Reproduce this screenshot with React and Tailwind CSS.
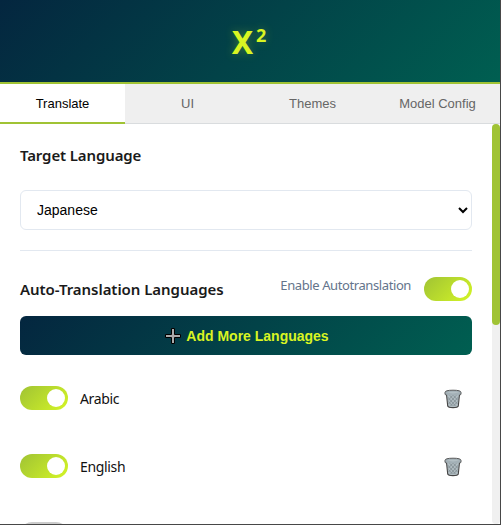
import React from "react";

const tabs = ["Translate", "UI", "Themes", "Model Config"];

function Toggle() {
  return (
    <div className="flex h-6 w-12 shrink-0 items-center justify-end rounded-full bg-[linear-gradient(135deg,#a0c334,#d4f526)] pr-[3px]">
      <div className="h-[18px] w-[18px] rounded-full bg-white" />
    </div>
  );
}

function Trash() {
  return (
    <svg width="18" height="20" viewBox="0 0 18 20" fill="none">
      <path d="M2.4 4.5 3.7 17Q4.2 18.6 9 18.6T14.3 17L15.6 4.5Z" fill="#b0bcc1" stroke="#454545" strokeWidth="1.1" />
      <path d="M3.6 8 11.5 17M5 5.5 13.5 15M8.5 5.5 14 11.5M4.4 12.5 8.5 17M14.4 8 6.5 17M13 5.5 4.5 15M9.5 5.5 4 11.5M13.6 12.5 9.5 17" stroke="#7b878d" strokeWidth="0.7" />
      <path d="M1 3.4Q1 1.2 9 1.2T17 3.4V5Q17 6 15.4 6Q9 7 2.6 6Q1 6 1 5Z" fill="#a3b0b6" />
      <path d="M2.6 6Q1 6 1 5V3.4Q1 1.2 9 1.2T17 3.4V5Q17 6 15.4 6" stroke="#4c4c4c" strokeWidth="0.9" />
      <path d="M2.4 3.6Q9 1.8 15.6 3.6Q9 5.2 2.4 3.6Z" fill="#b3bfc4" />
    </svg>
  );
}

function LanguageRow({ name }) {
  return (
    <div className="flex h-6 items-center">
      <Toggle />
      <span className="ml-3 flex-1 pt-[2px] text-[14px] leading-5 tracking-[-0.35px] text-[#111]">{name}</span>
      <button className="mr-2.5 pt-[2px]" aria-label="Delete">
        <Trash />
      </button>
    </div>
  );
}

export default function App() {
  return (
    <div className="flex h-[525px] w-[501px] flex-col overflow-hidden border-r border-b border-[#474747] bg-white font-['Noto_Sans',sans-serif]">
      <header className="flex h-[84px] shrink-0 items-start justify-center border-b-2 border-[#a0c334] bg-[linear-gradient(135deg,#04263f,#005f51)]">
        <h1 className="flex pt-[19px] pr-[2px] font-bold leading-[46px] text-[#d9f522] [text-shadow:0_0_10px_rgba(212,245,38,0.3)]">
          <span className="text-[32px]">X</span>
          <span className="ml-[3px] text-[18px] leading-[33px]">2</span>
        </h1>
      </header>
      <nav className="grid h-10 shrink-0 grid-cols-4 font-['Liberation_Sans',sans-serif] text-[13px]">
        {tabs.map((t, i) => (
          <button
            key={t}
            className={
              i === 0
                ? "border-b-2 border-[#a0c334] bg-white pt-[2px] text-black"
                : "border-b border-[#d9dcde] bg-[#efefef] pt-px text-[#666]"
            }
          >
            {t}
          </button>
        ))}
      </nav>
      <div className="flex h-[400px] min-h-0">
        <main className="h-[400px] flex-1 overflow-hidden px-5">
          <h2 className="mt-[19px] h-[47px] text-[15px] font-semibold leading-6 tracking-[-0.12px] text-[#1a1a1a]">Target Language</h2>
          <select
            className="block h-10 w-full rounded-md border border-[#e2e8f0] bg-white px-3 font-['Liberation_Sans',sans-serif] text-[14px] text-black"
            defaultValue="Japanese"
          >
            <option>Japanese</option>
          </select>
          <div className="mt-5 h-px bg-[#e2e8f0]" />
          <div className="mt-[26px] flex h-6 items-center justify-between">
            <h2 className="text-[15px] font-semibold leading-6 tracking-[-0.05px] text-[#1a1a1a]">Auto-Translation Languages</h2>
            <div className="flex">
              <span className="mr-[13px] text-[13px] leading-4 tracking-[-0.4px] text-[#64748b]">Enable Autotranslation</span>
              <Toggle />
            </div>
          </div>
          <button className="mt-[15px] flex h-[39px] w-full items-center justify-center rounded-md bg-[linear-gradient(135deg,#04263f,#005f51)] pl-[2px] font-['Liberation_Sans',sans-serif] text-[14px] font-bold text-[#d9f522]">
            <svg className="mr-[5px]" width="16" height="16" viewBox="0 0 16 16">
              <path d="M6.5.5h3v6h6v3h-6v6h-3v-6h-6v-3h6z" fill="#aaa" stroke="#000" />
            </svg>
            <span className="pt-px">Add More Languages</span>
          </button>
          <div className="mt-[31px] flex flex-col gap-11">
            <LanguageRow name="Arabic" />
            <LanguageRow name="English" />
            <div className="h-6 w-12 shrink-0 rounded-full bg-[#ccc]" />
          </div>
        </main>
        <div className="w-2 rounded bg-[#f0f0f0]">
          <div className="h-[201px] rounded bg-[#a0c334]" />
        </div>
      </div>
    </div>
  );
}
